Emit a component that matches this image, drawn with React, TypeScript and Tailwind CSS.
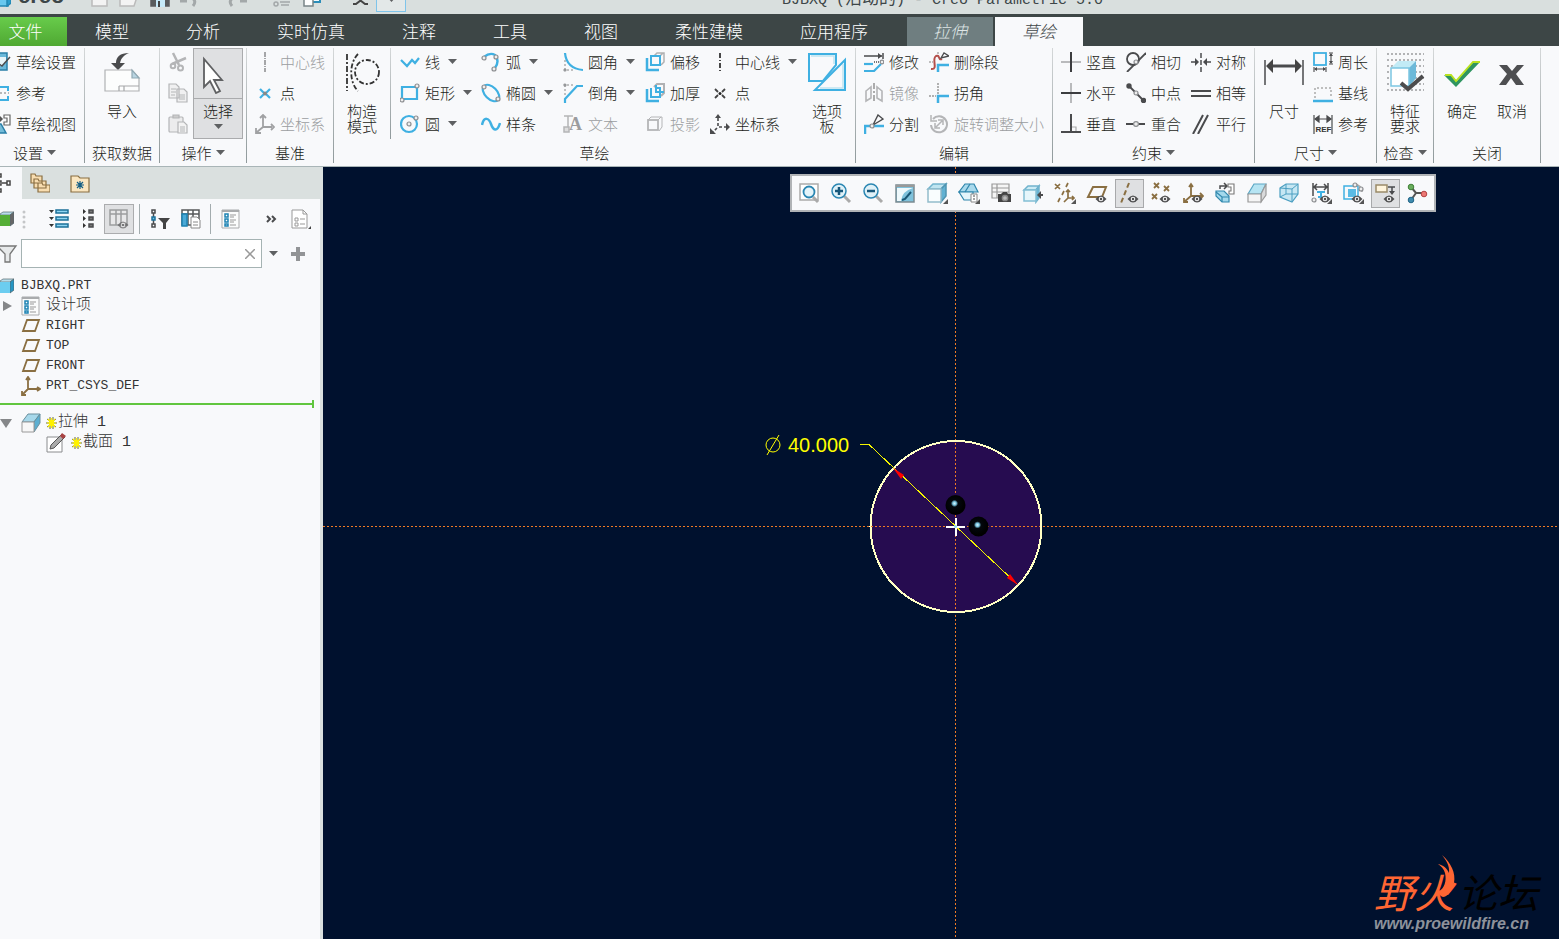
import React from "react";

const B = "#3fb0e2";
const D = "#4a4b4d";
const G = "#b4b5b7";
const L = "#bfe3f1";
const T = "#8a6f42";

const cjk = "font-['Noto_Sans_CJK_SC',sans-serif]";
const mono = "font-['Liberation_Mono','Noto_Sans_CJK_SC',monospace]";

type SvgProps = { children: React.ReactNode; size?: "sm" | "lg"; stroke?: string; sw?: number };

function Svg({ children, size = "sm", stroke = D, sw = 1.5 }: SvgProps) {
  const n = size === "sm" ? 20 : 40;
  return (
    <svg
      viewBox={`0 0 ${n} ${n}`}
      className={size === "sm" ? "h-5 w-5 shrink-0" : "h-10 w-10 shrink-0"}
      fill="none"
      stroke={stroke}
      strokeWidth={sw}
      aria-hidden="true"
    >
      {children}
    </svg>
  );
}

function Dot({ x, y, r = 2 }: { x: number; y: number; r?: number }) {
  return <circle cx={x} cy={y} r={r} fill="#eee" stroke="#8b8d90" strokeWidth="1.2" />;
}

function Eye({ x = 14, y = 16 }: { x?: number; y?: number }) {
  return (
    <g stroke="none">
      <path d={`M${x - 5.5} ${y}Q${x} ${y - 7} ${x + 5.5} ${y}Q${x} ${y + 7} ${x - 5.5} ${y}Z`} fill="#4f4f50" />
      <circle cx={x} cy={y} r="2.3" fill="#f4f4f4" />
      <circle cx={x} cy={y} r="1.2" fill="#4f4f50" />
    </g>
  );
}

function Corner() {
  return <path d="M21 16v5h-5z" fill="#555" stroke="none" />;
}

function Caret() {
  return (
    <svg viewBox="0 0 9 5" className="h-[5px] w-[9px] shrink-0" aria-hidden="true">
      <path d="M0 0h9L4.500 5z" fill="#5e6062" />
    </svg>
  );
}

const icons: Record<string, React.ReactNode> = {
  setup: (
    <Svg>
      <path d="M2 1h14v17H2z" fill="#6ab8da" stroke="#2a7fa8" />
      <path d="M4 5h11v5l-4 4H4z" fill="#e6f3f8" stroke="none" />
      <path d="M19 5l-8 9-3-2" />
    </Svg>
  ),
  refs: (
    <Svg stroke={B} sw={2}>
      <path d="M3 4h14v4M17 13v4H3" />
      <path d="M5 10h13" strokeDasharray="2 2" strokeWidth="1" stroke="#777" />
    </Svg>
  ),
  sview: (
    <Svg>
      <path d="M2 10h8l5 9H2z" fill="#74bcd9" stroke="#2a7fa8" />
      <path d="M5 5h5M8 2l3 3-3 3" stroke="#555" />
      <path d="M13 1h6v10h-6V8h3V4h-3z" fill="#fff" stroke="#666" strokeWidth="1.200" />
    </Svg>
  ),
  cut: (
    <Svg stroke={G} sw={2.5}>
      <path d="M5 1l6 12M18 6L4 12" />
      <circle cx="12.500" cy="16" r="2.500" strokeWidth="2" />
      <circle cx="5" cy="14" r="2.300" strokeWidth="2" />
    </Svg>
  ),
  copy: (
    <Svg stroke={G} sw={1.2}>
      <path d="M1 1h7l3 3v11H1zM9 6h7l3 3v10H9z" fill="#f0f0f1" />
      <path d="M3 6h5M3 9h5M3 12h4M11 12h6M11 14h6M11 16h6" />
    </Svg>
  ),
  paste: (
    <Svg stroke={G} sw={1.2}>
      <rect x="1" y="3" width="14" height="15" rx="1" fill="#ececed" />
      <path d="M5 1h6v3H5z" fill="#ccc" />
      <path d="M10 8h6l3 3v8h-9z" fill="#f3f3f3" />
      <path d="M12 13h5M12 15h5M12 17h5" />
    </Svg>
  ),
  clineOff: (
    <Svg stroke="#a5a6a8" sw={2}>
      <path d="M10 0v20" strokeDasharray="5 1 1 1" />
    </Svg>
  ),
  cline: (
    <Svg stroke="#333" sw={1.8}>
      <path d="M10 1v19" strokeDasharray="5 2 1 2" />
    </Svg>
  ),
  pointBlue: (
    <Svg stroke={B} sw={2.2}>
      <path d="M5 6l4 4M15 6l-4 4M5 15l4-4M15 15l-4-4" />
      <circle cx="10" cy="10.500" r="2" fill="#888" stroke="none" />
    </Svg>
  ),
  point: (
    <Svg stroke="#444" sw={1.8}>
      <path d="M5 6l3 3M15 6l-3 3M5 15l3-3M15 15l-3-3" />
      <circle cx="10" cy="10.500" r="1.500" fill="#222" stroke="none" />
    </Svg>
  ),
  csysOff: (
    <Svg stroke="#a0a1a3" sw={1.8}>
      <path d="M8 3v10h9M8 13l-6 5M5 4l3-3 3 3M16 10l3 3-3 3M1 14v5h5" />
    </Svg>
  ),
  csys: (
    <Svg stroke={D} sw={1.6}>
      <path d="M8 4v9h8M7 14l-4 4" strokeDasharray="3 2" />
      <path d="M5 4l3-4 3 4zM16 9l4 4-4 4zM0 14v6h6z" fill={D} stroke="none" />
    </Svg>
  ),
  line: (
    <Svg stroke={B} sw={2.2}>
      <path d="M1 8l6 6 5-6 3 3 4-5" />
    </Svg>
  ),
  rect: (
    <Svg stroke={B} sw={2.2}>
      <path d="M2 4h15v12H2z" />
      <Dot x={17} y={3} />
      <Dot x={2} y={17} />
    </Svg>
  ),
  circle: (
    <Svg stroke={B} sw={2.2}>
      <circle cx="9" cy="10" r="8" />
      <Dot x={9} y={10} />
      <Dot x={16} y={4} />
    </Svg>
  ),
  arc: (
    <Svg stroke={B} sw={2.4}>
      <path d="M3 5Q9 0 14 3Q19 9 14 16" />
      <Dot x={3} y={6} />
      <Dot x={15} y={5} />
      <Dot x={13} y={17} />
    </Svg>
  ),
  ellipse: (
    <Svg stroke={B} sw={2.2}>
      <ellipse cx="10" cy="10" rx="10" ry="6" transform="rotate(45 10 10)" />
      <Dot x={3} y={4} />
      <Dot x={17} y={16} />
    </Svg>
  ),
  spline: (
    <Svg stroke={B} sw={2.5}>
      <path d="M1 11C3 2 8 4 10 10s6 9 9-1" />
    </Svg>
  ),
  fillet: (
    <Svg stroke={B} sw={2.2}>
      <path d="M2 8v10h10" stroke="#888" strokeWidth="1" strokeDasharray="2 2" />
      <path d="M2 1c1 11 7 16 18 17" />
      <Dot x={2} y={18} r={1} />
    </Svg>
  ),
  chamfer: (
    <Svg stroke={B} sw={2.2}>
      <path d="M2 12V2h10" stroke="#888" strokeWidth="1" strokeDasharray="2 2" />
      <path d="M2 20v-4L14 3h6" />
      <Dot x={2} y={2} r={1} />
    </Svg>
  ),
  text: (
    <Svg stroke={G} sw={1.5}>
      <path d="M1 2h9M5 2v12" />
      <text x="6" y="16" fontSize="18" fontWeight="bold" fill="#9b9c9e" stroke="none" fontFamily="Liberation Serif">A</text>
      <rect x="1" y="13" width="5" height="5" fill="#ddd" />
    </Svg>
  ),
  offset: (
    <Svg stroke={B} sw={2}>
      <path d="M9 4l3-3h7v9l-3 3M15 4l3-3" stroke="#b0b1b3" strokeWidth="1.500" />
      <rect x="6" y="4" width="9" height="9" />
      <path d="M2 6v12h12" strokeWidth="2.500" />
    </Svg>
  ),
  thicken: (
    <Svg stroke={B} sw={2}>
      <path d="M9 4l3-3h7v9l-3 3" stroke="#b0b1b3" />
      <path d="M6 5v9h9v-4M11 2v7h8M11 5h4v4" />
      <path d="M2 6v12h12" strokeWidth="2.500" />
    </Svg>
  ),
  project: (
    <Svg stroke={G} sw={1.8}>
      <rect x="3" y="6" width="10" height="10" />
      <path d="M3 6l3-3h11v10l-3 4M13 6l3-3" strokeWidth="1" />
    </Svg>
  ),
  modify: (
    <Svg>
      <path d="M0 4h18M19 1v6" />
      <path d="M14 1l4 3-4 3z" fill={D} stroke="none" />
      <path d="M0 12h9" stroke={B} strokeWidth="2.200" />
      <path d="M0 19h10l7-7" stroke={B} strokeWidth="2.200" />
      <path d="M10 10h6" strokeDasharray="1 1" />
      <Dot x={18} y={10} r={1.8} />
    </Svg>
  ),
  mirror: (
    <Svg stroke={G} sw={1.6}>
      <path d="M10 0v20" strokeDasharray="6 2 2 2" stroke="#999" />
      <path d="M2 8l5-4v11l-5 3zM18 8l-5-4v11l5 3z" />
    </Svg>
  ),
  divide: (
    <Svg>
      <path d="M1 20v-8h6M10 12h10" stroke={B} strokeWidth="2.500" />
      <path d="M9 11l5-10 5 4z" strokeWidth="1.400" />
      <Dot x={8} y={12} />
    </Svg>
  ),
  delseg: (
    <Svg>
      <path d="M0 10h4M9 0v3" stroke="#aaa" strokeDasharray="2 1" />
      <path d="M2 17c8 1 0-10 5-13 4-2 2 5 6 3" stroke="#b34f4b" strokeWidth="2" />
      <path d="M12 6l3-5 5 3z" strokeWidth="1.300" />
      <path d="M9 20v-7h11" stroke={B} strokeWidth="2.500" />
    </Svg>
  ),
  corner: (
    <Svg>
      <path d="M0 13h7M9 0v11" stroke="#999" strokeDasharray="2 1" />
      <path d="M9 20v-7h11" stroke={B} strokeWidth="2.500" />
    </Svg>
  ),
  rotate: (
    <Svg stroke={G} sw={2}>
      <path d="M4 5a8 8 0 1 1-2 6" />
      <path d="M2 1v6h6M7 13l6-6M9 6h5v5M6 9v5h5" strokeWidth="1.500" />
    </Svg>
  ),
  vert: (
    <Svg>
      <path d="M0 10h20" stroke="#b9babc" strokeWidth="2" />
      <path d="M10 0v20" stroke="#3c3d3f" strokeWidth="2" />
    </Svg>
  ),
  horiz: (
    <Svg>
      <path d="M10 0v20" stroke="#b9babc" strokeWidth="2" />
      <path d="M0 10h20" stroke="#3c3d3f" strokeWidth="2" />
    </Svg>
  ),
  perp: (
    <Svg sw={2}>
      <path d="M10 0v18M0 18h20" />
      <path d="M11 13h4v4" stroke="#aaa" strokeWidth="1.200" />
    </Svg>
  ),
  tangent: (
    <Svg sw={1.8}>
      <circle cx="7" cy="7" r="6" />
      <path d="M1 20L20 1" />
      <Dot x={10} y={10} />
    </Svg>
  ),
  mid: (
    <Svg sw={1.8}>
      <path d="M3 3l15 15" />
      <circle cx="3" cy="3" r="1.800" fill={D} />
      <circle cx="17.500" cy="17.500" r="1.800" fill={D} />
      <Dot x={10} y={10} />
    </Svg>
  ),
  coin: (
    <Svg sw={2}>
      <path d="M0 10h19" />
      <Dot x={10} y={10} r={2.4} />
    </Svg>
  ),
  sym: (
    <Svg sw={1.5}>
      <path d="M10 1v19" strokeDasharray="5 2" />
      <path d="M0 10h7M20 10h-7" />
      <path d="M4 6l4 4-4 4zM16 6l-4 4 4 4z" fill={D} stroke="none" />
    </Svg>
  ),
  equal: (
    <Svg sw={2}>
      <path d="M0 8h20M0 13h20" />
    </Svg>
  ),
  para: (
    <Svg sw={2}>
      <path d="M2 20L12 1M7 20L17 1" />
    </Svg>
  ),
  perim: (
    <Svg sw={1.1}>
      <rect x="1" y="1" width="12" height="12" stroke={B} strokeWidth="1.800" />
      <path d="M16 1h4M16 12h4M18 2v9M1 15v5M13 15v5M2 17h10" />
      <path d="M16 4l2-3 2 3zM16 9l2 3 2-3zM4 15l-3 2 3 2zM10 15l3 2-3 2z" fill={D} stroke="none" />
    </Svg>
  ),
  base: (
    <Svg>
      <path d="M2 15V5h16v10" stroke="#aaa" strokeDasharray="2 2" />
      <path d="M0 18h20" stroke={B} strokeWidth="2.500" />
    </Svg>
  ),
  refdim: (
    <Svg sw={1.2}>
      <path d="M1 1v19M19 1v19M2 5h16" />
      <path d="M6 2L2 5l4 3zM14 2l4 3-4 3z" fill={D} />
      <text x="2.500" y="18" fontSize="8" fontWeight="bold" fill="#333" stroke="none" fontFamily="Liberation Sans">REF</text>
    </Svg>
  ),
  import: (
    <Svg size="lg" sw={1.2}>
      <path d="M27 1c-9 0-13 4-13 10h-5l7 7 7-7h-5c1-5 4-8 9-10z" fill={D} stroke="none" />
      <path d="M3 18h27l7 8v13H3z" fill="#fcfdfd" stroke="#b0b2b4" />
      <path d="M30 18v8h7z" fill="#b9d5e2" stroke="#90a9b4" />
      <path d="M17 34h20M17 34v5M22 34v5" stroke="#a5a7a9" />
    </Svg>
  ),
  select: (
    <Svg size="lg" sw={1.8}>
      <path d="M10 5v28l6-6 6 12 4-2-6-11h8z" fill="#fff" stroke="#606163" />
    </Svg>
  ),
  construct: (
    <Svg size="lg" sw={1.8} stroke="#333">
      <path d="M5 2v37" strokeDasharray="6 2 2 2" />
      <path d="M16 2c-9 9-9 28 0 37" strokeDasharray="5 2 2 2" />
      <circle cx="25" cy="20" r="12" strokeDasharray="5 2 2 2" />
    </Svg>
  ),
  palette: (
    <Svg size="lg" stroke={B} sw={2}>
      <path d="M2 2h27v11L16 29H2z" />
      <path d="M38 8v30H8z" fill="#f8f9fb" />
      <path d="M4 4h23v8M36 12v24H13" stroke={L} strokeWidth="1.500" />
    </Svg>
  ),
  dim: (
    <Svg size="lg" sw={1.5}>
      <path d="M1 8v25M39 8v25" />
      <path d="M8 14h24" strokeWidth="3" />
      <path d="M2 14l7-7v14zM38 14l-7-7v14z" fill="#444" stroke="none" />
    </Svg>
  ),
  feature: (
    <Svg size="lg">
      <path d="M2 2h37M2 8h37M2 14h37M2 20h37M2 26h37M2 32h37M2 38h37" stroke="#9b9c9e" strokeDasharray="2 2" />
      <path d="M6 16l7-7h18l-6 7z" fill="#c2ebf6" stroke="none" />
      <path d="M24 16l7-7v17l-7 9z" fill="#6db9d9" stroke="none" />
      <path d="M6 16h18v18H6z" fill="#fff" stroke="#7cc6e2" />
      <path d="M16 31l7 6L38 24" stroke="#4c4c4d" strokeWidth="4" />
    </Svg>
  ),
  ok: (
    <Svg size="lg">
      <path d="M2 23h7l6 6L31 10h7L14 35z" fill="#2f9561" stroke="none" />
      <path d="M3 23h6l5 6L31 10h7" stroke="#b9e21f" strokeWidth="1.800" />
    </Svg>
  ),
  cancel: (
    <Svg size="lg">
      <path d="M7 13h8l5 6 5-6h7l-8 9 8 11h-8l-5-7-5 7H7l8-11z" fill="#4e4f51" stroke="none" />
    </Svg>
  ),
};

type Item = { i: string; t: string; caret?: boolean; off?: boolean };

function Cmd({ i, t, caret, off }: Item) {
  return (
    <button
      type="button"
      disabled={off}
      className={`flex h-[31px] items-center gap-[5px] whitespace-nowrap ${off ? "text-[#9b9da0]" : "text-[#1c1e20]"}`}
    >
      {icons[i]}
      <span>{t}</span>
      {caret && (
        <span className="pl-[3px]">
          <Caret />
        </span>
      )}
    </button>
  );
}

function Column({ items, width }: { items: Item[]; width: string }) {
  return (
    <div className={`flex shrink-0 flex-col items-start ${width}`}>
      {items.map((it) => (
        <Cmd key={it.i} {...it} />
      ))}
    </div>
  );
}

function Big({ i, lines, width }: { i: string; lines: string[]; width: string }) {
  return (
    <button type="button" className={`flex shrink-0 flex-col items-center pt-[6px] ${width}`}>
      {icons[i]}
      <span className="pt-[11px]">
        {lines.map((l) => (
          <span key={l} className="block leading-[15px]">
            {l}
          </span>
        ))}
      </span>
    </button>
  );
}

type GroupProps = { label: string; caret?: boolean; width: string; labelClass?: string; children: React.ReactNode };

function Group({ label, caret, width, labelClass = "justify-center", children }: GroupProps) {
  return (
    <section className={`flex shrink-0 ${width}`} aria-label={label}>
      <div className="flex min-w-0 flex-1 flex-col">
        <div className="flex h-[93px]">{children}</div>
        <div className={`flex h-[27px] items-center gap-1 ${labelClass}`}>
          <span className="whitespace-nowrap">{label}</span>
          {caret && <Caret />}
        </div>
      </div>
      <div className="mt-[2px] mb-[3px] w-px bg-linear-to-b from-[#d5d8d9] to-[#8f999b]" />
    </section>
  );
}

function Ribbon() {
  return (
    <div className={`flex h-[121px] overflow-hidden border-b border-[#a9b5b7] bg-[#f8f9fb] text-[15px] leading-[18px] font-light text-[#1c1e20] ${cjk}`}>
      <Group label="设置" caret width="w-[85px]" labelClass="pl-[13px]">
        <div className="-ml-[9px]">
          <Column width="w-[93px]" items={[{ i: "setup", t: "草绘设置" }, { i: "refs", t: "参考" }, { i: "sview", t: "草绘视图" }]} />
        </div>
      </Group>
      <Group label="获取数据" width="w-[75px]">
        <Big i="import" lines={["导入"]} width="w-full" />
      </Group>
      <Group label="操作" caret width="w-[87px]">
        <div className="flex flex-1 justify-between pr-[3px] pl-2">
          <div className="flex flex-col">
            {[["cut", "剪切"], ["copy", "复制"], ["paste", "粘贴"]].map(([k, n]) => (
              <button key={k} type="button" disabled aria-label={n} className="flex h-[31px] items-center">
                {icons[k]}
              </button>
            ))}
          </div>
          <button type="button" className="mt-[2px] flex w-[50px] flex-col items-center border border-[#aaabad] bg-[#dfe0e2]">
            <span className="flex h-[50px] w-full items-center justify-center border-b border-[#aaabad] pr-2">{icons.select}</span>
            <span className="pt-[3px] pb-1">选择</span>
            <Caret />
          </button>
        </div>
      </Group>
      <Group label="基准" width="w-[87px]">
        <div className="pl-2">
          <Column width="w-[78px]" items={[{ i: "clineOff", t: "中心线", off: true }, { i: "pointBlue", t: "点" }, { i: "csysOff", t: "坐标系", off: true }]} />
        </div>
      </Group>
      <Group label="草绘" width="w-[522px]">
        <Big i="construct" lines={["构造", "模式"]} width="w-[56px]" />
        <div className="mt-[2px] w-px bg-linear-to-b from-[#d5d8d9] to-[#8f999b]" />
        <div className="flex pl-[9px]">
          <Column width="w-[81px]" items={[{ i: "line", t: "线", caret: true }, { i: "rect", t: "矩形", caret: true }, { i: "circle", t: "圆", caret: true }]} />
          <Column width="w-[82px]" items={[{ i: "arc", t: "弧", caret: true }, { i: "ellipse", t: "椭圆", caret: true }, { i: "spline", t: "样条" }]} />
          <Column width="w-[82px]" items={[{ i: "fillet", t: "圆角", caret: true }, { i: "chamfer", t: "倒角", caret: true }, { i: "text", t: "文本", off: true }]} />
          <Column width="w-[65px]" items={[{ i: "offset", t: "偏移" }, { i: "thicken", t: "加厚" }, { i: "project", t: "投影", off: true }]} />
          <Column width="w-[92px]" items={[{ i: "cline", t: "中心线", caret: true }, { i: "point", t: "点" }, { i: "csys", t: "坐标系" }]} />
        </div>
        <Big i="palette" lines={["选项", "板"]} width="w-[50px]" />
      </Group>
      <Group label="编辑" width="w-[197px]">
        <div className="flex pl-2">
          <Column width="w-[65px]" items={[{ i: "modify", t: "修改" }, { i: "mirror", t: "镜像", off: true }, { i: "divide", t: "分割" }]} />
          <Column width="w-[120px]" items={[{ i: "delseg", t: "删除段" }, { i: "corner", t: "拐角" }, { i: "rotate", t: "旋转调整大小", off: true }]} />
        </div>
      </Group>
      <Group label="约束" caret width="w-[202px]">
        <div className="flex pl-2">
          <Column width="w-[65px]" items={[{ i: "vert", t: "竖直" }, { i: "horiz", t: "水平" }, { i: "perp", t: "垂直" }]} />
          <Column width="w-[65px]" items={[{ i: "tangent", t: "相切" }, { i: "mid", t: "中点" }, { i: "coin", t: "重合" }]} />
          <Column width="w-[60px]" items={[{ i: "sym", t: "对称" }, { i: "equal", t: "相等" }, { i: "para", t: "平行" }]} />
        </div>
      </Group>
      <Group label="尺寸" caret width="w-[122px]">
        <Big i="dim" lines={["尺寸"]} width="w-[58px]" />
        <Column width="w-[60px]" items={[{ i: "perim", t: "周长" }, { i: "base", t: "基线" }, { i: "refdim", t: "参考" }]} />
      </Group>
      <Group label="检查" caret width="w-[57px]">
        <Big i="feature" lines={["特征", "要求"]} width="w-full" />
      </Group>
      <Group label="关闭" width="w-[107px]">
        <Big i="ok" lines={["确定"]} width="w-[56px]" />
        <Big i="cancel" lines={["取消"]} width="w-[44px]" />
      </Group>
    </div>
  );
}

function QuickIcon({ name, width, children }: { name: string; width: string; children: React.ReactNode }) {
  return (
    <button type="button" aria-label={name} className={`flex shrink-0 ${width}`}>
      <Svg stroke="#a3a8a9">{children}</Svg>
    </button>
  );
}

function TitleBar() {
  return (
    <header className="flex h-[14px] items-end overflow-hidden bg-[#d9dfde] text-[#3d4648]">
      <div className="flex w-[376px] shrink-0 items-end overflow-hidden pb-[7px]">
        <div className="-ml-[9px] flex w-[99px] shrink-0 items-end gap-[7px]">
          <Svg>
            <path d="M0 3h17v16H0z" fill="#68c8ef" stroke="#2388b4" />
            <path d="M16 4l4-3v15l-4 3z" fill="#2a9ccb" stroke="#2388b4" />
          </Svg>
          <span className="font-['Liberation_Sans',sans-serif] text-[22px] leading-[22px] font-bold">creo</span>
        </div>
        <QuickIcon name="新建" width="w-[29px]"><path d="M2 1h10l5 5v13H2z" fill="#f3f3f3" stroke="#bbb" /></QuickIcon>
        <QuickIcon name="打开" width="w-[31px]"><path d="M1 19V3h8v4h10l-4 12z" fill="#f3f3f3" stroke="#bbb" /></QuickIcon>
        <QuickIcon name="保存" width="w-[30px]">
          <path d="M1 1h18v18H1z" fill="#595b5d" stroke="#595b5d" />
          <path d="M6 12h9v8H6z" fill="#c6e9f8" stroke="none" />
          <path d="M8 14h2v6H8z" fill="#444" stroke="none" />
        </QuickIcon>
        <QuickIcon name="撤消" width="w-[47px]"><path d="M0 14h7M12 11q5 3 1 8" strokeWidth="3" /></QuickIcon>
        <QuickIcon name="重做" width="w-[45px]"><path d="M20 14h-7M6 11q-5 3-1 8" strokeWidth="3" /></QuickIcon>
        <QuickIcon name="重新生成" width="w-[31px]">
          <path d="M8 12h10M8 15h10M9 18h8" strokeWidth="1.500" />
          <circle cx="4" cy="17" r="2" />
        </QuickIcon>
        <QuickIcon name="窗口" width="w-[48px]">
          <path d="M6 2h11v13H6z" fill="#f3fafd" stroke="#2b8db8" strokeWidth="2" />
          <path d="M1 12h9v7H1z" fill="#fff" stroke="#7a8588" />
        </QuickIcon>
        <QuickIcon name="关闭窗口" width="w-5"><path d="M5 10l9 7h3M14 10l-9 7H2" stroke="#444" strokeWidth="2" /></QuickIcon>
      </div>
      <button type="button" aria-label="自定义快速访问工具栏" className="mb-[2px] flex h-[26px] w-[30px] items-center justify-center border border-[#7fc4ea] bg-[#e3e8e8]">
        <Caret />
      </button>
      <h1 className="pb-[6px] pl-[376px] font-['Liberation_Mono','Noto_Sans_CJK_SC',monospace] text-[15px] leading-[15px] whitespace-pre">
        BJBXQ (<span className="text-[17px] leading-[15px]">活动的</span>) - Creo Parametric 5.0
      </h1>
    </header>
  );
}

function Tabs() {
  const tabs = ["模型", "分析", "实时仿真", "注释", "工具", "视图", "柔性建模", "应用程序"];
  return (
    <nav className={`flex h-8 items-end bg-[#3d4646] text-[17px] leading-[27px] font-light text-white ${cjk}`}>
      <button type="button" className="h-[29px] w-[67px] bg-linear-to-b from-[#68cc4b] to-[#4fa832] pr-4 pb-[2px] text-center">文件</button>
      <div className="flex gap-px">
        {tabs.map((t) => (
          <button key={t} type="button" className="h-[29px] px-7 pb-[2px] whitespace-nowrap">{t}</button>
        ))}
      </div>
      <div className="flex gap-[2px] pl-[11px] italic">
        <button type="button" className="h-[29px] w-[86px] bg-[#6f7e80] pb-[2px] text-[#dfe6e6]">拉伸</button>
        <button type="button" className="h-[29px] w-[88px] bg-[#f8f9fb] pb-[2px] text-[#3f4547]">草绘</button>
      </div>
    </nav>
  );
}

function ListDoc() {
  return (
    <Svg sw={1}>
      <path d="M1 1h17v18H1z" fill="#fbfcfc" stroke="#a9abad" />
      <path d="M1 1h17v2H1z" fill="#a9abad" stroke="none" />
      <path d="M4 5h3v3H4zM4 10h3v3H4zM4 15h3v2H4z" stroke="#1e83b3" strokeWidth="1.500" />
      <path d="M9 6h6M9 8h4M9 11h6M9 13h4M9 16h6" stroke="#999" />
    </Svg>
  );
}

function ColumnsIcon({ off }: { off?: boolean }) {
  return (
    <Svg stroke={off ? "#9c9d9f" : "#55585a"} sw={1.5}>
      <path d="M1 1h17v15H1z" fill={off ? "#e8e8e9" : "#fff"} />
      <path d="M1 5h17M7 1v15M12 1v15" />
      {!off && <path d="M1 5h5v12H1z" fill="#4aa9d6" stroke="#1e83b3" />}
      {off ? (
        <g opacity="0.6"><Eye x={14} y={16} /></g>
      ) : (
        <path d="M10 8h6l3 3v8h-9zM12 13h5M12 16h5" fill="#fff" stroke="#888" strokeWidth="1" />
      )}
    </Svg>
  );
}

function PlaneIcon() {
  return (
    <Svg stroke={T} sw={1.8}>
      <path d="M6 4h12l-4 11H2z" />
    </Svg>
  );
}

function Spark() {
  return (
    <svg viewBox="0 0 12 12" className="h-3 w-3 shrink-0" aria-hidden="true">
      <path d="M4 0v3M7 0v3M4 9v3M7 9v3M0 6h3M8 6h3M1 2l3 2M10 2L7 4M1 10l3-2M10 10L7 8" stroke="#6a6a3c" strokeWidth="1" />
      <path d="M3 3h5v6H3z" fill="#fff200" />
      <path d="M5.500 1v10M1 6h9M2 2l7 8M9 2l-7 8" stroke="#fff200" strokeWidth="1.200" />
    </svg>
  );
}

function Cube({ color, side }: { color: string; side: string }) {
  return (
    <svg viewBox="0 0 14 16" className="h-4 w-[14px] shrink-0" aria-hidden="true">
      <path d="M0 3l3-2h11l-4 3H0z" fill="#b8dcea" stroke="#66787f" strokeWidth=".800" />
      <path d="M10 4l4-3v11l-4 3z" fill={side} stroke="#55686f" strokeWidth=".800" />
      <path d="M0 4h10v11H0z" fill={color} />
    </svg>
  );
}

function TreeRow({ mark, icon, text, spark, indent }: { mark?: "right" | "down"; icon: React.ReactNode; text: string; spark?: boolean; indent?: boolean }) {
  return (
    <li className={`flex h-5 items-center whitespace-pre ${indent ? "pl-[25px]" : ""}`}>
      <span className="flex w-[21px] shrink-0 items-center">
        {mark && (
          <svg viewBox="0 0 12 12" className="h-3 w-3" aria-hidden="true">
            <path d={mark === "right" ? "M3 1l9 5-9 5z" : "M0 2h12L6 11z"} fill="#858789" />
          </svg>
        )}
      </span>
      {icon}
      <span className="flex items-center pl-[5px]">
        {spark && <Spark />}
        {text}
      </span>
    </li>
  );
}

function SidePanel() {
  return (
    <aside className="flex w-[323px] shrink-0 flex-col border-r-3 border-[#dae0df] bg-[#f8f9fb]">
      <div className="flex h-8 bg-[#dae0df]">
        <button type="button" aria-label="模型树" className="flex w-[22px] items-center bg-[#f8f9fb]">
          <svg viewBox="0 0 14 20" className="h-5 w-[14px]" fill="none" stroke="#444" strokeWidth="1.500" aria-hidden="true">
            <path d="M-2 1h3v3h-3zM-2 8h3v4h-3zM-2 16h3v3h-3zM7 8h3v4H7zM2 10h5" />
          </svg>
        </button>
        <button type="button" aria-label="文件夹浏览器" className="flex w-9 items-center justify-center">
          <Svg stroke={T} sw={1.2}>
            <path d="M1 1h4l1 2h6v7H1zM4 6h4l1 2h7v7H4zM8 10h4l1 2h7v7H8z" fill="#f8ddb0" />
          </Svg>
        </button>
        <button type="button" aria-label="收藏夹" className="flex w-[44px] items-center justify-center">
          <Svg stroke={T} sw={1.2}>
            <path d="M1 19V3h7l2 2h9v14z" fill="#fae6c0" />
            <path d="M10 8v8M6 12h8M7 9l6 6M13 9l-6 6" stroke="#155f85" />
          </Svg>
        </button>
      </div>
      <div className="flex h-10 items-center">
        <Cube color="#55ae37" side="#666" />
        <svg viewBox="0 0 20 20" className="h-5 w-5 shrink-0" fill="#c4c6c8" aria-hidden="true">
          <circle cx="10" cy="3" r="1.500" /><circle cx="10" cy="8" r="1.500" /><circle cx="10" cy="13" r="1.500" /><circle cx="10" cy="18" r="1.500" />
        </svg>
        <button type="button" aria-label="全部展开" className="flex w-[50px] shrink-0 justify-center">
          <Svg>
            <path d="M7 1h12v3H7zM7 8h12v3H7zM7 15h12v3H7z" fill="#8fd4f1" stroke="#1c7099" />
            <path d="M0 1h5L2.500 4zM0 8h5l-2.500 3zM0 15h5l-2.500 3z" fill="#333" stroke="none" />
          </Svg>
        </button>
        <button type="button" aria-label="全部折叠" className="mr-2 flex w-3 shrink-0 justify-center">
          <Svg>
            <path d="M9 1h4v3h-4zM9 8h4v3h-4zM9 15h4v3h-4z" fill="#777" />
            <path d="M3 0l3 2.500L3 5zM3 7l3 2.500L3 12zM3 14l3 2.500L3 19z" fill="#333" stroke="none" />
          </Svg>
        </button>
        <button type="button" aria-label="树列" className="flex h-[30px] w-[30px] shrink-0 items-center justify-center border border-[#abacae] bg-[#dfe0e2]">
          <ColumnsIcon off />
        </button>
        <div className="ml-[5px] h-[30px] w-px bg-[#a3acae]" />
        <button type="button" aria-label="树过滤器" className="flex w-10 shrink-0 justify-center">
          <Svg>
            <path d="M2 1h3v3H2zM2 15h3v3H2zM3.500 4v11" />
            <path d="M2 8h3v3H2z" fill="#68bfe5" stroke="#1c7099" />
            <path d="M8 9h12l-4 5v6h-3v-6z" fill="#444" stroke="none" />
          </Svg>
        </button>
        <button type="button" aria-label="列设置" className="flex w-[22px] shrink-0 justify-center"><ColumnsIcon /></button>
        <div className="ml-2 h-[30px] w-px bg-[#a3acae]" />
        <button type="button" aria-label="设计项" className="flex w-10 shrink-0 justify-center"><ListDoc /></button>
        <button type="button" aria-label="更多" className="flex w-10 shrink-0 justify-center">
          <Svg sw={2}><path d="M6 7l3 3-3 3M11 7l3 3-3 3" /></Svg>
        </button>
        <button type="button" aria-label="设置" className="flex shrink-0">
          <Svg sw={1} stroke="#999">
            <path d="M1 1h11l4 4v14H1z" fill="#fff" />
            <path d="M12 1v4h4M4 9h3v3H4zM4 14h3v3H4zM9 10h5M9 15h5" />
            <path d="M20 17v3h-3z" fill="#444" stroke="none" />
          </Svg>
        </button>
      </div>
      <div className="flex h-[29px] items-center pr-2">
        <svg viewBox="0 0 21 20" className="h-5 w-[21px] shrink-0" fill="#e7e9ea" stroke="#777" strokeWidth="1.300" aria-hidden="true">
          <path d="M-3 2h19l-6 8v8H5v-8z" />
        </svg>
        <label className="flex h-full min-w-0 flex-1 items-center border border-[#a5b3b3] bg-white pr-[6px]">
          <input aria-label="过滤" className="min-w-0 flex-1 px-1 text-[15px] outline-none" />
          <svg viewBox="0 0 10 10" className="h-[10px] w-[10px]" stroke="#999" strokeWidth="1.500" aria-hidden="true"><path d="M0 0l10 10M10 0L0 10" /></svg>
        </label>
        <button type="button" aria-label="过滤选项" className="flex w-[22px] justify-center"><Caret /></button>
        <button type="button" aria-label="添加" className="flex w-7 justify-center">
          <svg viewBox="0 0 14 14" className="h-[14px] w-[14px]" stroke="#929496" strokeWidth="4" aria-hidden="true"><path d="M7 0v14M0 7h14" /></svg>
        </button>
      </div>
      <div className={`pt-2 text-[13px] leading-5 font-light text-[#333] ${mono}`}>
        <div className="flex h-5 items-center gap-[7px]">
          <Cube color="#6ccdf0" side="#2596c4" />
          BJBXQ.PRT
        </div>
        <ul>
          <li className="contents text-[15px]">
            <ul><TreeRow mark="right" icon={<ListDoc />} text="设计项" /></ul>
          </li>
          <TreeRow icon={<PlaneIcon />} text="RIGHT" />
          <TreeRow icon={<PlaneIcon />} text="TOP" />
          <TreeRow icon={<PlaneIcon />} text="FRONT" />
          <TreeRow
            icon={
              <Svg stroke={T} sw={1.8}>
                <path d="M7 2v11h12M7 13l-6 6M5 4l2-3 2 3M16 11l3 2-3 2M1 15v4h4" />
              </Svg>
            }
            text="PRT_CSYS_DEF"
          />
        </ul>
        <div className="flex h-4 items-center pr-[6px]">
          <div className="h-[2px] flex-1 bg-[#61c63f]" />
          <div className="h-2 w-[2px] bg-[#61c63f]" />
        </div>
        <ul className="pt-px text-[15px]">
          <TreeRow
            mark="down"
            icon={
              <Svg sw={1}>
                <path d="M1 9l6-8h12l-6 8z" fill="#a7d8ea" stroke="#6a8f9d" />
                <path d="M13 9l6-8v9l-6 9z" fill="#5cafd1" stroke="#6a8f9d" />
                <path d="M1 9h12v10H1z" fill="#f7f7f7" stroke="#999" />
              </Svg>
            }
            spark
            text="拉伸 1"
          />
          <TreeRow
            indent
            icon={
              <Svg sw={1}>
                <path d="M1 4h15v15H1z" fill="#fff" stroke="#8a8c8e" />
                <path d="M4 16l1-4L16 1l3 3L8 15z" fill="#aaa" stroke="#555" />
                <path d="M14 3l2-3 4 3-3 3z" fill="#a94343" stroke="none" />
              </Svg>
            }
            spark
            text="截面 1"
          />
        </ul>
      </div>
    </aside>
  );
}

const viewTools: { n: string; on?: boolean; d: React.ReactNode }[] = [
  { n: "重新调整", d: <><path d="M1 1h18v16H1z" fill="#fff" stroke="#aaa" /><path d="M14 14l5 5" stroke="#aaa" strokeWidth="3" /><circle cx="10" cy="9" r="5.500" fill="#e5f4fa" stroke="#2a86b2" strokeWidth="1.800" /></> },
  { n: "放大", d: <><path d="M13 13l6 6" stroke="#aaa" strokeWidth="3" /><circle cx="8" cy="8" r="7" fill="#dff1f8" stroke="#2a86b2" /><path d="M8 4v8M4 8h8" stroke="#17577a" strokeWidth="2.500" /></> },
  { n: "缩小", d: <><path d="M13 13l6 6" stroke="#aaa" strokeWidth="3" /><circle cx="8" cy="8" r="7" fill="#dff1f8" stroke="#2a86b2" /><path d="M4 8h8" stroke="#17577a" strokeWidth="2.500" /></> },
  { n: "重画", d: <><path d="M1 2h18v17H1z" fill="#7fc2dc" stroke="#7b8b91" /><path d="M1 2h18v2H1z" fill="#999" stroke="none" /><path d="M2 5h16Q7 8 6 18H2z" fill="#eff9fc" stroke="none" /><path d="M16 9l-6 7-3 1" stroke="#195775" strokeWidth="2" /></> },
  { n: "显示样式", d: <><path d="M1 6l5-5h13l-5 5z" fill="#bfe4f0" stroke="#70b3cd" /><path d="M14 6l5-5v12l-5 6z" fill="#61b1d2" stroke="#4f94b1" /><path d="M1 6h13v13H1z" fill="#f9fdfe" stroke="#92bccb" /><Corner /></> },
  { n: "已保存方向", d: <><path d="M6 1h9l4 8H0z" fill="#a9d9ec" stroke="#2f86ac" strokeWidth="1.200" /><path d="M0 9h14v8H5z" fill="#e4f4fa" stroke="#2f86ac" strokeWidth="1.200" /><path d="M11 1L6 9" stroke="#2f86ac" strokeWidth="1.200" /><path d="M12 11h6v8h-6z" fill="#fff" stroke="#888" strokeWidth="1" /><path d="M14 13h2M14 16h2" strokeWidth="1" /><Corner /></> },
  { n: "视图管理器", d: <><path d="M1 1h17v14H1zM1 5h17M1 9h17M6 1v14" fill="#f5f5f5" stroke="#999" strokeWidth="1.200" /><path d="M7 11h3l2-2h4l1 2h3v8H7z" fill="#444" stroke="none" /><circle cx="14" cy="15" r="2.600" fill="#bbb" stroke="#888" /></> },
  { n: "透视图", d: <><path d="M1 7l4-4h11l-3 4z" fill="#ccebf4" stroke="#70b3cd" /><path d="M13 7l3-4v12l-3 4z" fill="#67b6d6" stroke="#70b3cd" /><path d="M1 7h12v11H1z" fill="#e6f6fb" stroke="#83bfd5" /><path d="M20 12h-4" strokeWidth="2" /><path d="M18 8v8l-4-4z" fill={D} stroke="none" /></> },
  { n: "基准显示过滤器", d: <><g stroke={T} strokeWidth="1.700"><path d="M0 1l5 5M5 1L0 6M13 0l-2 4M9 8l-2 4M5 15l-2 4M13 7v8h6M13 15l-4 4M17 13l2 2-2 2M11 9l2-2 2 2" /></g><Corner /></> },
  { n: "平面显示", d: <><path d="M6 4h13l-4 10H1z" stroke={T} strokeWidth="2" /><Eye /></> },
  { n: "轴显示", on: true, d: <><path d="M10 0L2 20" stroke={T} strokeWidth="2" strokeDasharray="5 3" /><Eye /></> },
  { n: "点显示", d: <><path d="M3 0l5 5M8 0L3 5M13 3l5 5M18 3l-5 5M1 11l5 5M6 11l-5 5" stroke={T} strokeWidth="1.800" /><Eye /></> },
  { n: "坐标系显示", d: <><path d="M8 2v11h11M8 13l-7 6M6 4l2-3 2 3M17 10l3 3-3 3M1 15v4h4" stroke={T} strokeWidth="1.800" /><Eye /></> },
  { n: "草绘视图", d: <><path d="M1 8h8l5 5v6H7l-6-6z" fill="#a3d8ec" stroke="#3188ad" strokeWidth="1.200" /><path d="M1 9l6 5h7M7 14v5" stroke="#3188ad" strokeWidth="1.200" /><path d="M5 6V3h6M9 0l3 3-3 3" /><path d="M13 1h6v10h-5V8h2V4h-3z" fill="#fff" stroke="#777" strokeWidth="1.100" /></> },
  { n: "修剪模型", d: <><path d="M1 11L7 1h12l-5 10z" fill="#b6e4f2" stroke="#5aa6c4" strokeWidth="1.200" /><path d="M14 11l5-10v11l-5 7z" fill="#d9dadb" stroke="#999" strokeWidth="1.200" /><path d="M1 11h13v8H1z" fill="#f5f5f5" stroke="#999" strokeWidth="1.200" /></> },
  { n: "线框", d: <><path d="M1 5l6-4h12v10l-6 8-12-5z" fill="#c6e7f3" stroke="#4c9fc1" strokeWidth="1.200" /><path d="M1 5l12 1 6-5M13 6v13M7 1v10h12M7 11l-6 3" stroke="#4c9fc1" strokeWidth="1" /></> },
  { n: "尺寸显示", d: <><path d="M2 0v13M17 0v11M3 4h13M6 1L3 4l3 3M13 1l3 3-3 3" /><path d="M6 9h8M10 9v6M7 14h4" stroke={B} strokeWidth="2" /><Dot x={3} y={17} /><Eye /><Corner /></> },
  { n: "约束显示", d: <><path d="M1 3h14v13H1z" stroke={B} /><path d="M5 6h8v8H5z" fill="#5abbe5" stroke="none" /><path d="M11 1q8 1 8 8" stroke="#aaa" /><Dot x={12} y={2} /><Dot x={18} y={6} /><Eye /><Corner /></> },
  { n: "注释显示", on: true, d: <><path d="M1 2h11v7H1z" fill="#fff5dc" stroke="#9b8b69" /><path d="M13 4h7M17 4v5" /><path d="M14 8h6l-3 4z" fill={D} stroke="none" /><Eye /></> },
  { n: "旋转中心", d: <><path d="M4 4l5 6h8M9 10l-5 7" stroke="#555" strokeWidth="2" /><circle cx="4" cy="4" r="2.800" fill="#69ad5d" stroke="#3f8037" strokeWidth="1" /><circle cx="17" cy="11" r="2.800" fill="#ec7774" stroke="#b34343" strokeWidth="1" /><circle cx="4" cy="17" r="2.800" fill="#3f8bae" stroke="#236586" strokeWidth="1" /></> },
];

function ViewToolbar() {
  return (
    <div role="toolbar" aria-label="图形工具栏" className="absolute top-[7px] left-[467px] flex h-[38px] items-center border-2 border-[#b0b3b6] bg-[#f8f9fb] px-px">
      {viewTools.map(({ n, on, d }) => (
        <button key={n} type="button" aria-label={n} className="flex w-8 shrink-0 items-center justify-center">
          <span className={`flex h-[29px] w-[29px] items-center justify-center ${on ? "border border-[#a8a9ab] bg-[#dfe0e2]" : ""}`}>
            <svg viewBox="-1 -1 22 22" className="h-[22px] w-[22px] shrink-0" fill="none" stroke={D} strokeWidth="1.500" aria-hidden="true">
              {d}
            </svg>
          </span>
        </button>
      ))}
    </div>
  );
}

function Canvas() {
  return (
    <main className="relative min-w-0 flex-1 overflow-hidden bg-[#00112e]">
      <svg className="absolute inset-0 h-full w-full" role="img" aria-label="草绘">
        <defs>
          <radialGradient id="ball" cx="45%" cy="42%" r="50%">
            <stop offset="0" stopColor="#d9f8ff" />
            <stop offset=".18" stopColor="#79c4e0" />
            <stop offset=".36" stopColor="#03070d" />
            <stop offset="1" stopColor="#000" />
          </radialGradient>
        </defs>
        <circle cx="633" cy="359.500" r="85.500" fill="#260c50" />
        <path d="M0 359.500h4000M632.500 0v4000" stroke="#f07a24" strokeWidth="1" strokeDasharray="2 2" shapeRendering="crispEdges" />
        <circle cx="633" cy="359.500" r="85.500" fill="none" stroke="#ffffc4" strokeWidth="2" shapeRendering="crispEdges" />
        <path d="M537 277.500h9L694 417" stroke="#f4f400" fill="none" strokeWidth="1" shapeRendering="crispEdges" />
        <path d="M570 301l11 7-3 4zM695 418l-11-7 3-4z" fill="#ff0000" />
        <path d="M623 360h19M633 351v18" stroke="#fff" strokeWidth="2" />
        <circle cx="632.500" cy="359.500" r="1.500" fill="#8fd8ee" />
        <circle cx="632.500" cy="338" r="10" fill="url(#ball)" />
        <circle cx="655.500" cy="359.500" r="10" fill="url(#ball)" />
        <ellipse cx="450" cy="278" rx="7" ry="7" fill="none" stroke="#ffff00" />
        <path d="M444 288l12-20" stroke="#ffff00" />
        <text x="465" y="285" fill="#ffff00" fontSize="20" fontFamily="Liberation Sans, Arial, sans-serif">40.000</text>
      </svg>
      <ViewToolbar />
      <div className="absolute right-[17px] bottom-[6px] w-[168px] italic">
        <div className={`flex text-[40px] leading-[48px] ${cjk}`}>
          <span className="text-[#ff6633]">野火</span>
          <span className="pl-1 text-black">论坛</span>
        </div>
        <svg viewBox="0 0 20 42" className="absolute -top-[12px] left-[63px] h-[42px] w-5" aria-hidden="true">
          <path d="M5 0C14 8 19 18 17 28 15 36 10 42 6 42 3 41 1 38 2 36 7 34 10 26 8 18 7 14 4 11 1 9 6 10 10 13 12 18 13 11 9 5 5 0z" fill="#ff6633" />
        </svg>
        <div className="font-['Liberation_Sans',sans-serif] text-[16px] leading-[18px] font-bold text-[#8d929b]">www.proewildfire.cn</div>
      </div>
    </main>
  );
}

export default function App() {
  return (
    <div className="flex min-h-screen flex-col overflow-hidden">
      <TitleBar />
      <Tabs />
      <Ribbon />
      <div className="flex flex-1">
        <SidePanel />
        <Canvas />
      </div>
    </div>
  );
}
